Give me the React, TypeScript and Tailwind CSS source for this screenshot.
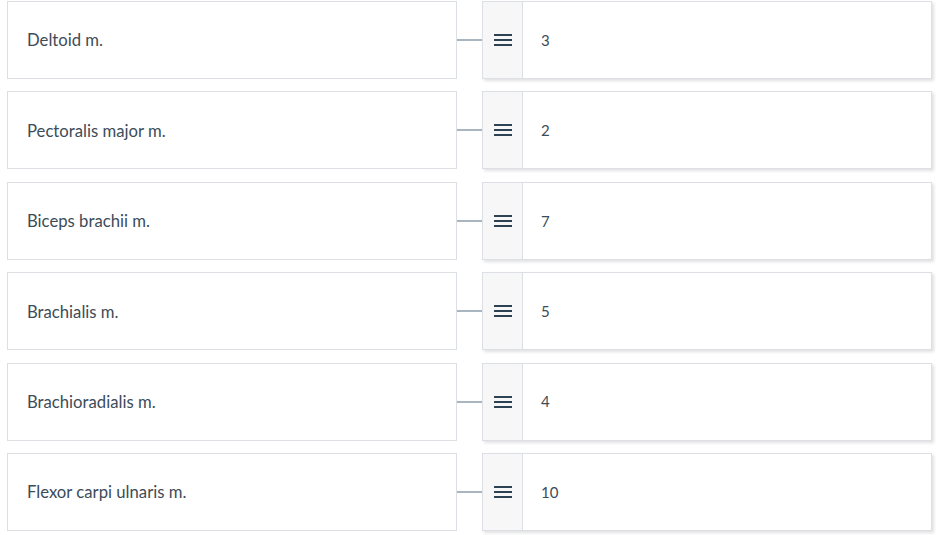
import React from "react";

const rows = [
  ["Deltoid m.", "3"],
  ["Pectoralis major m.", "2"],
  ["Biceps brachii m.", "7"],
  ["Brachialis m.", "5"],
  ["Brachioradialis m.", "4"],
  ["Flexor carpi ulnaris m.", "10"],
];

function Handle() {
  return (
    <svg width="18" height="12" viewBox="0 0 18 12" className="block">
      <rect x="0" y="0" width="18" height="2" fill="#2d4252" />
      <rect x="0" y="5" width="18" height="2" fill="#2d4252" />
      <rect x="0" y="10" width="18" height="2" fill="#2d4252" />
    </svg>
  );
}

export default function App() {
  return (
    <div
      className="w-[951px] h-[535px] bg-white overflow-hidden pt-px pl-[7px]"
      style={{ fontFamily: "Lato, 'Open Sans', sans-serif" }}
    >
      <div className="flex flex-col gap-[12.4px]">
        {rows.map(([label, value]) => (
          <div key={label} className="flex items-center h-[78px]">
            <div className="w-[450px] h-full border border-[#dcdfe3] bg-white flex items-center pl-[19px] pt-[2px] text-[16.7px] text-[#3d4c58]">
              {label}
            </div>
            <div className="w-[25px] h-[2px] bg-[#a9b6bf]" />
            <div className="w-[450px] h-full border border-[#dcdfe3] bg-white flex shadow-[2px_2px_3px_rgba(0,0,0,0.12)]">
              <div className="w-[40px] h-full bg-[#f7f7f8] border-r border-[#dcdfe3] flex items-center justify-center pl-[1px]">
                <Handle />
              </div>
              <div className="flex items-center pl-[18px] text-[15px] text-[#3d4c58]">
                {value}
              </div>
            </div>
          </div>
        ))}
      </div>
    </div>
  );
}
